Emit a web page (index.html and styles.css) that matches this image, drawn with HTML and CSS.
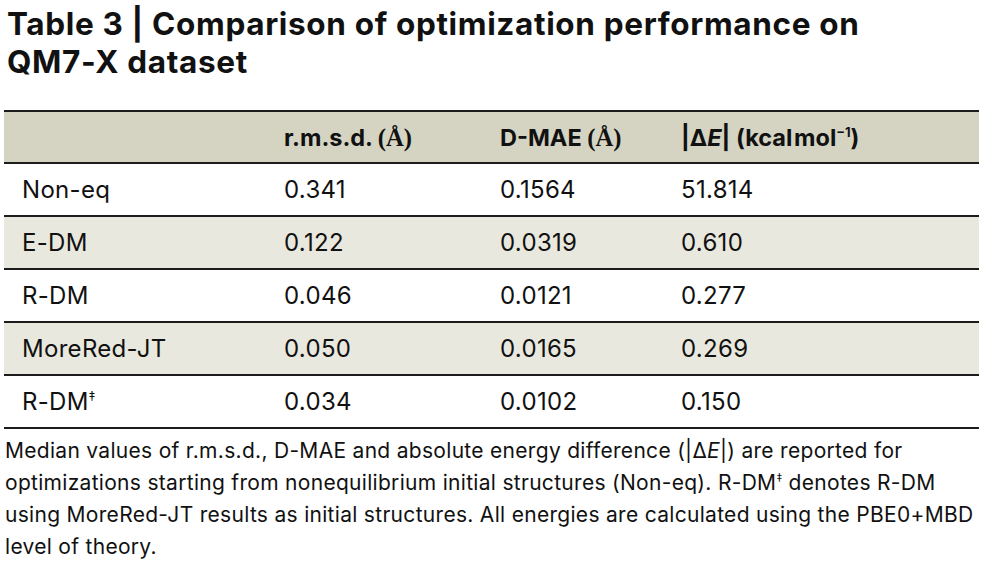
FILE: index.html
```html
<!DOCTYPE html>
<html>
<head>
<meta charset="utf-8">
<link rel="stylesheet" href="styles.css">
</head>
<body>
<div class="page">
  <h1 class="title">Table 3 | Comparison of optimization performance on QM7-X dataset</h1>
  <div class="table">
    <div class="row head">
      <div class="cell"></div>
      <div class="cell">r.m.s.d. <span class="serif">(Å)</span></div>
      <div class="cell">D-MAE <span class="serif">(Å)</span></div>
      <div class="cell">|Δ<i>E</i>| (kcal<span class="thin"> </span>mol<sup>−1</sup>)</div>
    </div>
    <div class="row">
      <div class="cell">Non-eq</div><div class="cell">0.341</div><div class="cell">0.1564</div><div class="cell">51.814</div>
    </div>
    <div class="row alt">
      <div class="cell">E-DM</div><div class="cell">0.122</div><div class="cell">0.0319</div><div class="cell">0.610</div>
    </div>
    <div class="row">
      <div class="cell">R-DM</div><div class="cell">0.046</div><div class="cell">0.0121</div><div class="cell">0.277</div>
    </div>
    <div class="row alt">
      <div class="cell">MoreRed-JT</div><div class="cell">0.050</div><div class="cell">0.0165</div><div class="cell">0.269</div>
    </div>
    <div class="row">
      <div class="cell">R-DM<sup class="dag">‡</sup></div><div class="cell">0.034</div><div class="cell">0.0102</div><div class="cell">0.150</div>
    </div>
  </div>
  <p class="caption">Median values of r.m.s.d., D-MAE and absolute energy difference (|Δ<i>E</i>|) are reported for optimizations starting from nonequilibrium initial structures (Non-eq). R-DM<sup class="dag">‡</sup> denotes R-DM using MoreRed-JT results as initial structures. All energies are calculated using the PBE0+MBD level of theory.</p>
</div>
</body>
</html>
```
FILE: styles.css
```css
* { box-sizing: border-box; }
html, body { margin: 0; padding: 0; background: #fff; }
body {
  font-family: Inter, "Open Sans", sans-serif;
  color: #111;
}
.page {
  width: 991px;
  padding: 5px 12px 0 4px;
}
.title {
  margin: 0;
  font-size: 31.5px;
  line-height: 38px;
  font-weight: 700;
  letter-spacing: 0.65px;
  width: 900px;
  padding-left: 3px;
}
.table {
  margin-top: 29px;
  border-top: 2px solid #1c1c1c;
}
.row {
  display: grid;
  grid-template-columns: 280px 216px 181px 1fr;
  height: 53px;
  align-items: center;
  border-bottom: 2px solid #1c1c1c;
  font-size: 24px;
  letter-spacing: 0.3px;
}
.row .cell:first-child { padding-left: 18px; }
.head {
  background: #d5d4c2;
  font-weight: 700;
  height: 52px;
  font-size: 23.5px;
  letter-spacing: 0;
}
.alt { background: #e9e8de; }
.serif { font-family: "Liberation Serif", serif; font-weight: 700; font-size: 1.05em; }
.thin { font-size: 0.3em; }
sup {
  font-size: 0.55em;
  vertical-align: 0.7em;
  line-height: 0;
}
.dag { font-size: 0.55em; }
.caption {
  margin: 6px 0 0 1px;
  width: 986px;
  font-size: 21px;
  line-height: 32px;
  letter-spacing: 0.3px;
  color: #111;
}
```
